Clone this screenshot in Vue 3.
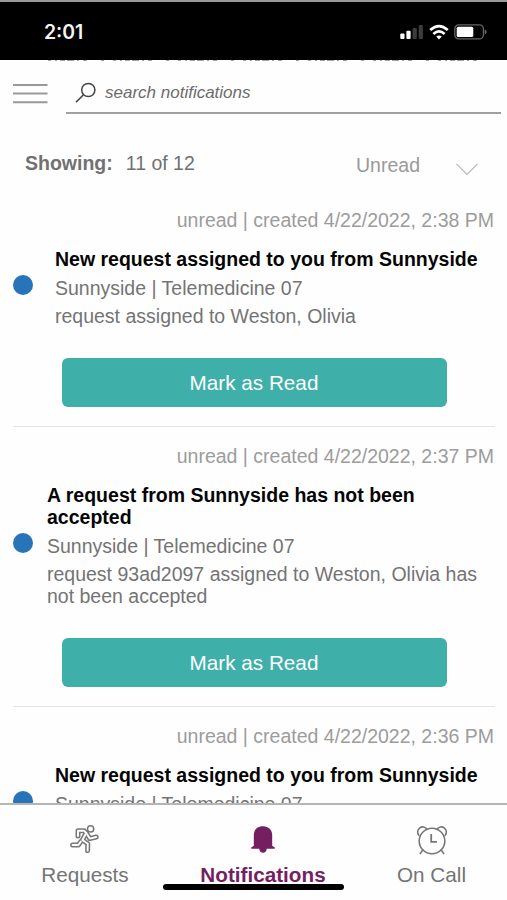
<script setup>
const items = [
  { id: 1, meta: 'unread | created 4/22/2022, 2:38 PM', title: 'New request assigned to you from Sunnyside', place: 'Sunnyside | Telemedicine 07', body: 'request assigned to Weston, Olivia', wide: false },
  { id: 2, meta: 'unread | created 4/22/2022, 2:37 PM', title: 'A request from Sunnyside has not been accepted', place: 'Sunnyside | Telemedicine 07', body: 'request 93ad2097 assigned to Weston, Olivia has not been accepted', wide: true },
  { id: 3, meta: 'unread | created 4/22/2022, 2:36 PM', title: 'New request assigned to you from Sunnyside', place: 'Sunnyside | Telemedicine 07', body: '', wide: false },
]
</script>

<template>
  <div class="screen">
    <header class="status">
      <span class="time">2:01</span>
      <div class="indicators">
        <svg class="signal" width="24" height="16" viewBox="0 0 24 16">
          <rect x="0.3" y="9.4" width="4.2" height="5.6" rx="1" fill="#fff" />
          <rect x="6.4" y="6.8" width="4.2" height="8.2" rx="1" fill="#fff" />
          <rect x="12.6" y="4" width="4.2" height="11" rx="1" fill="#3c3c3c" />
          <rect x="18.7" y="1" width="4.2" height="14" rx="1" fill="#3c3c3c" />
        </svg>
        <svg class="wifi" width="20" height="16" viewBox="0 0 20 16">
          <g fill="none" stroke="#fff" stroke-width="2.7">
            <path d="M1.2 6.1 Q10 -1.8 18.8 6.1" />
            <path d="M4.4 9.9 Q10 4.8 15.6 9.9" />
          </g>
          <path d="M7.2 12.6 Q10 10.4 12.8 12.6 L10 15.5Z" fill="#fff" />
        </svg>
        <svg class="battery" width="33" height="16" viewBox="0 0 33 16">
          <rect x="0.8" y="0.9" width="28.6" height="14" rx="4" fill="none" stroke="#666" stroke-width="1.3" />
          <rect x="2.7" y="2.7" width="16.6" height="10.4" rx="1.6" fill="#fff" />
          <path d="M30.7 5.4 Q32.7 6.2 32.7 7.9 Q32.7 9.6 30.7 10.4Z" fill="#666" />
        </svg>
      </div>
    </header>

    <!-- Sliver of scrolled content showing below the status bar -->
    <svg class="sliver" width="507" height="2" viewBox="0 0 507 2">
      <path d="M48 0.5H477" stroke="#a2a2a2" stroke-width="1" stroke-dasharray="3 4 2 3 5 2 7 3 2 4 4 14 3 9" />
    </svg>

    <div class="search">
      <svg class="menu" width="35" height="22" viewBox="0 0 35 22">
        <path d="M0 2H34.5M0 10.6H34.5M0 19.2H34.5" stroke="#999" stroke-width="2" />
      </svg>
      <div class="field">
        <svg width="22" height="22" viewBox="0 0 22 22">
          <circle cx="13.3" cy="8" r="6.6" fill="none" stroke="#444" stroke-width="1.5" />
          <path d="M8.5 12.7L1 20.2" stroke="#444" stroke-width="1.6" />
        </svg>
        <span>search notifications</span>
      </div>
    </div>

    <div class="filter">
      <div class="showing"><b>Showing:</b><span>11 of 12</span></div>
      <div class="select">
        <span>Unread</span>
        <svg width="22" height="13" viewBox="0 0 22 13">
          <path d="M0.5 0.8L11 11.3L21.5 0.8" fill="none" stroke="#b5b5b5" stroke-width="1.2" />
        </svg>
      </div>
    </div>

    <main class="list">
      <article v-for="item in items" :key="item.id" class="item">
        <p class="meta">{{ item.meta }}</p>
        <div class="row" :class="{ wide: item.wide }">
          <i class="dot"></i>
          <div class="text">
            <h2>{{ item.title }}</h2>
            <p>{{ item.place }}</p>
            <p class="body">{{ item.body }}</p>
          </div>
        </div>
        <button v-if="item.body">Mark as Read</button>
      </article>
    </main>

    <nav class="tabs">
      <a class="tab">
        <svg width="32" height="32" viewBox="0 0 32 32">
          <g stroke-linecap="round" stroke-linejoin="round" fill="none">
            <g stroke="#777" stroke-width="5">
              <path d="M9 11V5.8H15.2" />
              <path d="M17.2 8L13.4 15L18.8 18.8L18.6 25.6" />
              <path d="M17.2 8L20.8 13.6L27.2 12" />
              <path d="M11.8 16.6L9.4 20H3.6" />
            </g>
            <circle cx="21.6" cy="3.9" r="3.1" fill="#fff" stroke="#777" stroke-width="1.5" />
            <g stroke="#fff" stroke-width="1.9">
              <path d="M9 11V5.8H15.2L17.2 8" />
              <path d="M17.2 8L13.4 15L18.8 18.8L18.6 25.6" />
              <path d="M17.2 8L20.8 13.6L27.2 12" />
              <path d="M11.8 16.6L9.4 20H3.6" />
            </g>
          </g>
        </svg>
        <span>Requests</span>
      </a>
      <a class="tab active">
        <svg width="32" height="32" viewBox="0 0 32 32">
          <path d="M16 1.2C10.4 1.2 6.8 4.8 6.8 10.2V20.8L4.2 22.4V23.8H12.2Q12.8 27.8 16 27.8Q19.2 27.8 19.8 23.8H27.8V22.4L25.2 20.8V10.2C25.2 4.8 21.6 1.2 16 1.2Z" fill="#751f63" />
        </svg>
        <span>Notifications</span>
      </a>
      <a class="tab">
        <svg width="32" height="32" viewBox="0 0 32 32">
          <g fill="none" stroke="#777" stroke-width="1.6" stroke-linecap="round">
            <circle cx="16" cy="16" r="12.8" />
            <path d="M2.8 10.3A4.8 4.8 0 1 1 10.8 3.8M21.2 3.8A4.8 4.8 0 1 1 29.2 10.3" />
            <path d="M6.8 25L4.2 28.6M25.2 25L27.8 28.6" />
            <path d="M15.2 9V16.8H21" stroke-linecap="butt" stroke-width="1.8" />
          </g>
        </svg>
        <span>On Call</span>
      </a>
      <div class="home"></div>
    </nav>
  </div>
</template>

<style>
body { margin: 0; background: #fff; }
</style>

<style scoped>
* { box-sizing: border-box; }
.screen {
  width: 507px; height: 900px; overflow: hidden; display: flex; flex-direction: column;
  background: #fefefe; color: #747474; font: 19.5px/22px "Liberation Sans", Arial, sans-serif;
}
p, h2 { margin: 0; font-size: inherit; }
.status {
  flex: none; height: 60px; background: #000; border-top: 2px solid #999;
  display: flex; justify-content: space-between; align-items: center; padding: 2px 20px 0 44px;
}
.time { color: #f4f4f4; font: 600 19.4px/24px Inter, sans-serif; }
.indicators { display: flex; align-items: center; }
.wifi { margin-left: 5px; }
.battery { margin-left: 5px; }
.sliver { flex: none; display: block; }
.search { flex: none; height: 52px; display: flex; padding: 0 6px 0 13px; gap: 18px; }
.menu { margin-top: 21px; flex: none; }
.field {
  flex: 1; display: flex; align-items: center; gap: 8px; padding: 11px 0 0 9px;
  border-bottom: 2px solid #a0a0a0; font-size: 17px; font-style: italic; color: #6c6c6c;
}
.filter { flex: none; height: 77px; display: flex; justify-content: space-between; padding: 38px 29px 0 25px; }
.showing { display: flex; gap: 13px; color: #717171; }
.select { display: flex; gap: 36px; padding-top: 2px; color: #999; }
.select svg { margin-top: 9px; }
.list { flex: 1; min-height: 0; overflow: hidden; padding: 0 12px 0 13px; }
.item { padding: 18px 0 19px; border-bottom: 1px solid #e4e4e4; }
.meta { text-align: right; color: #9c9c9c; white-space: nowrap; padding-right: 1px; }
.row { display: flex; align-items: center; gap: 22px; margin-top: 17px; }
.row.wide { gap: 14px; }
.dot { flex: none; width: 20px; height: 20px; border-radius: 50%; background: #2874b8; margin-bottom: 4.5px; }
.text { flex: 1; display: flex; flex-direction: column; gap: 6px; }
.body { min-height: 22px; }
h2 { color: #050505; font-weight: 700; margin-bottom: 1px; }
button {
  display: block; width: 385px; height: 49px; margin: 31px 0 0 48.5px; border: 0; border-radius: 6px;
  background: #3fafaa; color: #fff; font: 20.7px/24px "Liberation Sans", Arial, sans-serif;
}
.tabs {
  flex: none; position: relative; height: 97px; border-top: 2px solid #b5b5b5; background: #fefefe;
  display: grid; grid-template-columns: 170px 186px 151px; font-size: 20.7px; line-height: 24px;
}
.tab { display: flex; flex-direction: column; align-items: center; padding-top: 20px; gap: 6px; }
.active { color: #751f63; font-weight: 700; }
.home { position: absolute; left: 163px; top: 79px; width: 181px; height: 6px; border-radius: 3px; background: #000; }
</style>
